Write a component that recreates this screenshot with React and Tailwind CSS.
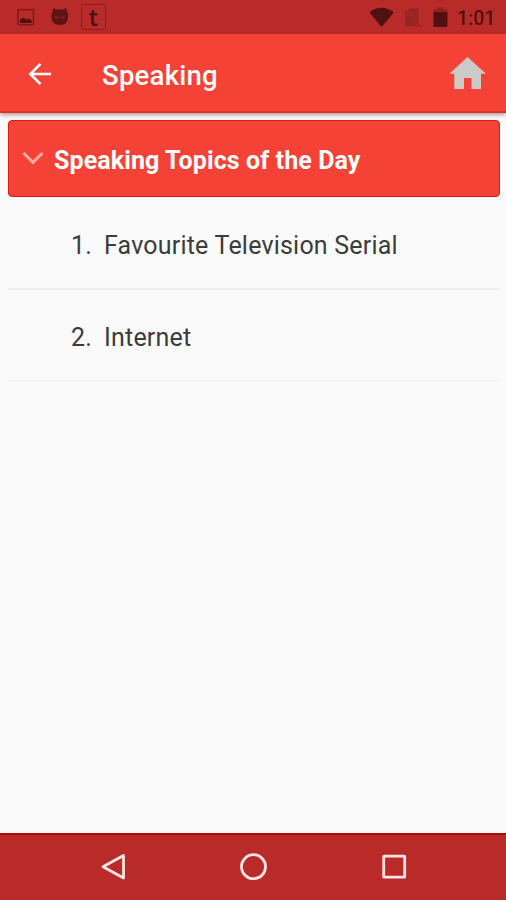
const topics = [
    { id: 1, title: 'Favourite Television Serial' },
    { id: 2, title: 'Internet' },
];

function StatusBar() {
    return (
        <div className="flex h-[34px] shrink-0 items-center bg-[#b92b29] pl-[17px] pr-[11px] text-[#4d1211]">
            {/* Notifications */}
            <svg className="h-[34px] w-[52px]" viewBox="0 0 52 34" fill="none">
                <rect x="1" y="9.7" width="15.5" height="15" rx="1" stroke="#801918" strokeWidth="1.6" />
                <path d="M3 23v-3.6l3.5-2 3 2 2.5-1 3 2.6v2z" fill="#4d1211" />
                <path d="M36.5 8l2.6 1.6h7.4l2.6-1.6 1 4c1.5 2 1.3 7.5-.2 9.5-1.2 2.7-3.7 3.5-7.1 3.5s-5.9-.8-7.1-3.5c-1.5-2-1.7-7.5-.2-9.5z" fill="#5e1413" />
                <path d="M36.5 17h12.5" stroke="#7a1b1a" strokeWidth="1" />
                <circle cx="39.4" cy="17.5" r="1" fill="#a32624" />
                <circle cx="45.8" cy="17.5" r="1" fill="#a32624" />
            </svg>
            <span className="ml-[12px] flex h-[26px] w-[25px] items-center justify-center rounded-[3px] border border-[#8a1f1e] font-['Noto_Sans',sans-serif] text-[23px] font-semibold leading-none">
                t
            </span>

            {/* Wifi, sim, battery */}
            <svg className="ml-auto h-[34px] w-[82px]" viewBox="0 0 82 34" fill="none">
                <path d="M1.5 12.5Q13.3 3.2 25.8 12.5L13.6 27z" fill="currentColor" />
                <path d="M41.5 8.5h9.2v14.2L38.8 10.8zM37 12.5l13 13.7H37z" fill="#982524" />
                <path d="M36.5 10.5L52.8 27" stroke="#8f2221" strokeWidth="1.3" />
                <path d="M69.5 7.5h6v2h4V12H65.5V9.5h4z" fill="#8f2221" />
                <path d="M65.5 12h14v13.5q0 1.5-1.5 1.5H67q-1.5 0-1.5-1.5z" fill="currentColor" />
            </svg>
            <span className="ml-[7px] w-[38px] pt-[4px] text-[19.5px] font-medium leading-[30px]">1:01</span>
        </div>
    );
}

function AppBar() {
    return (
        <header className="relative flex h-[79px] shrink-0 items-center border-b-2 border-[#e92c1c] bg-[#f44336] pl-[28px] pr-[19px] shadow-[0_2px_4px_rgba(0,0,0,0.35)]">
            <svg className="h-[24px] w-[24px]" viewBox="0 0 24 24" fill="none" stroke="#fff" strokeWidth="2.6">
                <path d="M23 13H3M12.5 2.8L2.3 13l10.2 10.2" />
            </svg>
            <h1 className="ml-[50px] mt-[6px] text-[27.5px] font-medium leading-8 tracking-[0.25px] text-white">Speaking</h1>
            <svg className="ml-auto h-[34px] w-[38px]" viewBox="0 0 38 34" fill="#ccc9c9">
                <path d="M18.5 1L.5 17.8h4.8V33H15V22h7.5v11H32V17.8h5z" />
            </svg>
        </header>
    );
}

function App() {
    return (
        <div className="flex h-[900px] w-[506px] flex-col overflow-hidden bg-[#fafafa] font-[Roboto,sans-serif]">
            <StatusBar />
            <AppBar />

            <main className="flex flex-1 flex-col pl-[8px] pr-[6px] pt-[7px]">
                {/* Group header */}
                <div className="flex h-[77px] items-center rounded-[4px] border-[1.5px] border-[#e01a12] bg-[#f44336] pl-[13px]">
                    <svg className="mb-[2px] h-[14px] w-[22px]" viewBox="0 0 22 14" fill="none" stroke="#ffaaa3" strokeWidth="3">
                        <path d="M1.5 2L11 11.3 20.5 2" />
                    </svg>
                    <h2 className="ml-[10px] mt-[4px] whitespace-nowrap text-[25px] font-bold leading-8 tracking-[0.1px] text-white">
                        Speaking Topics of the Day
                    </h2>
                </div>

                <ul className="pt-px">
                    {topics.map((topic) => (
                        <li
                            key={topic.id}
                            className="flex h-[92px] items-center border-b-2 border-[#efefef] pl-[63px] pt-[5px] text-[25px] tracking-[0.2px] text-[#3c3c3c] last:border-[#f6f6f6]"
                        >
                            <span className="w-[33px]">{topic.id}.</span>
                            <span className="whitespace-nowrap">{topic.title}</span>
                        </li>
                    ))}
                </ul>
            </main>

            {/* Navigation bar */}
            <nav className="flex h-[67px] shrink-0 border-t-2 border-[#ac0b0a] bg-[#b92b29] pl-[100px]">
                <svg className="h-[65px] w-[310px]" viewBox="0 0 310 65" fill="none" stroke="#fde4e3" strokeWidth="2.8">
                    <path d="M23.5 20.5v22.5L3 31.8z" strokeLinejoin="round" />
                    <circle cx="153.5" cy="31.7" r="12" />
                    <rect x="283.7" y="21.2" width="21" height="21" rx="0.5" />
                </svg>
            </nav>
        </div>
    );
}

export default App;
